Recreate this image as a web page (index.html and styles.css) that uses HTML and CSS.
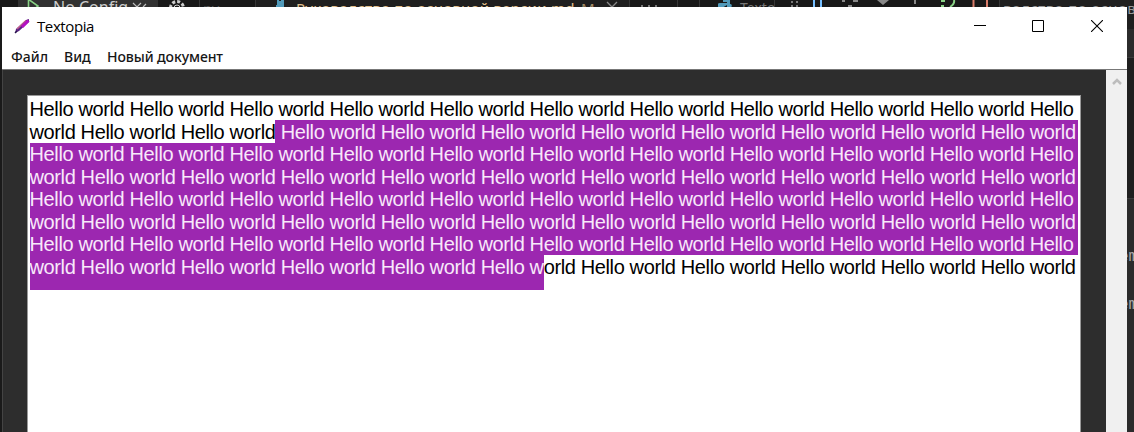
FILE: index.html
```
<!DOCTYPE html>
<html lang="ru">
<head>
<meta charset="utf-8">
<title>Textopia</title>
<link rel="stylesheet" href="styles.css">
</head>
<body>
<div class="desktop">
  <div class="editor-strip" aria-hidden="true">
    <span class="strip-item run-config">No Config</span>
    <span class="strip-item dim-file">ру</span>
    <span class="strip-item md-name">Руководство по основной версии.md</span>
    <span class="strip-item md-flag">M</span>
    <span class="strip-item tab-name">Texto</span>
    <span class="strip-item crumb">водство по основ</span>
    <svg class="strip-icons" width="1134" height="9" fill="none">
      <path d="M28.500 -2V14L38 6L28 -1" stroke="#89d185" stroke-width="1.600"/>
      <path d="M133 3l4 4 4-4M143 7l3-3" stroke="#bbb" stroke-width="1.200"/>
      <circle cx="177" cy="8" r="6.500" stroke="#ccc" stroke-width="3" stroke-dasharray="3 2"/>
      <circle cx="177" cy="8" r="3" stroke="#ccc"/>
      <path d="M276 5h8v3h-8zM277 0h7v5h-7z" fill="#519aba"/>
      <path d="M279 0h2v1h-2z" fill="#1f1f1f"/>
      <path d="M607 2l5 5 5-5" stroke="#888" stroke-width="1.300"/>
      <path d="M641 6h2M648 6h2M655 6h2" stroke="#777" stroke-width="2"/>
      <path d="M199.500 0v8M255.500 0v8M629.500 0v8M677.500 0v8M699.500 0v8M774.500 0v8M999.500 0v8" stroke="#363636"/>
      <path d="M718 8V4q0-1 2-1h7V2h-4V0h7v4q3 0 1 4h-4V5l-5 3z" fill="#519aba"/>
      <path d="M791 2h2M796 2h2M791 6h2M796 6h2" stroke="#777" stroke-width="2"/>
      <path d="M814 0v7M821 0v7" stroke="#75beff" stroke-width="2"/>
      <path d="M842 1h3M853 1h5M848 6h4M915 0v4" stroke="#888" stroke-width="2"/>
      <path d="M877 0h12l-6 5z" fill="#888"/>
      <path d="M941 1h4M941 6h3M954 0q1 4-4 7" stroke="#89d185" stroke-width="2"/>
      <path d="M973.500 0v7M987 0v7" stroke="#d97c69" stroke-width="2"/>
    </svg>
  </div>
  <div class="side-code" aria-hidden="true"><span class="code-one">em</span><span class="code-two">em</span></div>

  <main class="window">
    <header class="titlebar">
      <svg class="app-icon" width="16" height="16" viewBox="0 0 16 16" fill="none">
        <path d="M1 15l1-4L12 2l3-1v3L5 13z" fill="#5a2583"/>
        <path d="M3 11L12 2.500" stroke="#c15b8e" stroke-width="1.500"/>
        <path d="M8 9l6.500-6.500" stroke="#b40fc3" stroke-width="3"/>
        <path d="M1 15l2-2" stroke="#261349" stroke-width="1.500"/>
      </svg>
      <h1 class="title">Textopia</h1>
      <div class="controls">
        <svg width="12" height="12"><path d="M0 5.500h12" stroke="#000"/></svg>
        <svg width="12" height="12"><path d="M.5.5h11v11H.5z" fill="none" stroke="#000"/></svg>
        <svg width="12" height="12"><path d="M0 0l12 12M12 0L0 12" stroke="#000" stroke-width="1.100"/></svg>
      </div>
    </header>
    <nav class="menu">
      <span class="menu-file">Файл</span><span class="menu-view">Вид</span><span class="menu-new">Новый документ</span>
    </nav>
    <div class="client">
      <div class="workspace">
        <div class="page">
          <div class="row"><span>Hello world Hello world Hello world Hello world Hello world Hello world Hello world Hello world Hello world Hello world Hello</span></div>
          <div class="row"><span>world Hello world Hello world</span><span class="selected fill"> Hello world Hello world Hello world Hello world Hello world Hello world Hello world Hello world</span></div>
          <div class="row"><span class="selected fill">Hello world Hello world Hello world Hello world Hello world Hello world Hello world Hello world Hello world Hello world Hello</span></div>
          <div class="row"><span class="selected fill">world Hello world Hello world Hello world Hello world Hello world Hello world Hello world Hello world Hello world Hello world</span></div>
          <div class="row"><span class="selected fill">Hello world Hello world Hello world Hello world Hello world Hello world Hello world Hello world Hello world Hello world Hello</span></div>
          <div class="row"><span class="selected fill">world Hello world Hello world Hello world Hello world Hello world Hello world Hello world Hello world Hello world Hello world</span></div>
          <div class="row"><span class="selected fill">Hello world Hello world Hello world Hello world Hello world Hello world Hello world Hello world Hello world Hello world Hello</span></div>
          <div class="row last"><span class="selected">world Hello world Hello world Hello world Hello world Hello w</span><span>orld Hello world Hello world Hello world Hello world Hello world</span></div>
        </div>
      </div>
      <div class="scrollbar"><svg width="10" height="8"><path d="M1 6l4-4 4 4" fill="none" stroke="#bdbdbd" stroke-width="2.500"/></svg></div>
    </div>
  </main>
</div>
</body>
</html>
```
FILE: styles.css
```
* { box-sizing: border-box; }
body { margin: 0; background: #1c1c1c; overflow: hidden; }
.desktop {
  position: relative;
  width: 1134px;
  height: 432px;
  padding: 7px 7px 0 2px;
  overflow: hidden;
  background: #1a1a1a;
}

/* Code editor behind the window */
.editor-strip {
  position: absolute;
  inset: 0 0 auto 0;
  height: 20px;
  overflow: hidden;
  font: 15px/18px "Noto Sans", sans-serif;
  white-space: nowrap;
  background: linear-gradient(90deg, #181818 18px, #313131 18px 158px, #181818 158px 255px, #1f1f1f 255px 629px, #181818 629px 999px, #1f1f1f 999px);
}
.strip-item { position: absolute; top: -1px; }
.run-config { left: 53px; top: -2px; color: #ccc; font-size: 16px; }
.dim-file { left: 203px; color: #555; }
.md-name { left: 296px; color: #e2c08d; letter-spacing: .25px; }
.md-flag { left: 581px; color: #a68d68; }
.tab-name { left: 740px; top: -1px; color: #777; font-size: 14px; }
.crumb { left: 1003px; color: #999; letter-spacing: .4px; }
.strip-icons { position: absolute; left: 0; top: 0; }
.side-code {
  position: absolute;
  top: 20px;
  right: 0;
  width: 7px;
  height: 412px;
  overflow: hidden;
  font: 16px/20px "Liberation Mono", monospace;
  color: #aaa;
  background: linear-gradient(#1f1f1f 9px, #2b2b2b 9px 37px, #3a3a3a 37px 38px, #1f1f1f 38px 178px, #3a3a3a 178px 179px, #2b2b2b 179px);
}
.code-one, .code-two { position: absolute; left: -8px; }
.code-one { top: 227px; }
.code-two { top: 275px; }

/* Application window */
.window {
  position: relative;
  display: flex;
  flex-direction: column;
  width: 1125px;
  height: 425px;
  background: #fff;
  color: #000;
}
.titlebar {
  display: flex;
  flex: none;
  align-items: center;
  height: 38px;
  padding: 0 24px 0 12px;
}
.app-icon { margin-right: 7px; }
.title { margin: 0; font: 400 15px/20px "Open Sans", sans-serif; letter-spacing: -.4px; }
.controls { display: flex; gap: 47px; margin-left: auto; }
.controls svg:nth-child(2) { margin-left: -1px; }
.menu {
  display: flex;
  flex: none;
  height: 24px;
  padding-left: 9px;
  font: 500 14px/24px "Noto Sans", sans-serif;
  white-space: nowrap;
  color: #161616;
}
.menu-file { width: 53px; }
.menu-view { width: 43px; }
.menu-new { letter-spacing: -.08px; }
.client { display: flex; flex: 1; min-height: 0; border-top: 1px solid #777; }
.workspace {
  flex: 1;
  padding: 25px 25px 0 24px;
  background: #2d2d2d;
  border-left: 1px solid #444;
}
.page {
  height: 100%;
  padding: 1.500px 1.600px 0 1.500px;
  background: #fff;
  border: 1px solid #999;
  border-bottom: 0;
  font: 20px/22.500px "Liberation Sans", Arial, sans-serif;
  letter-spacing: -.372px;
}
.row { display: flex; height: 22.500px; white-space: pre; }
.row:nth-child(even) { line-height: 24px; }
.selected { background: #9c27b0; color: #f8e9fa; }
.fill { flex: 1; }
.row.last { height: 35px; }
.scrollbar {
  width: 21px;
  padding-top: 7px;
  background: #f0f0f0;
  text-align: center;
  line-height: 8px;
}
```
